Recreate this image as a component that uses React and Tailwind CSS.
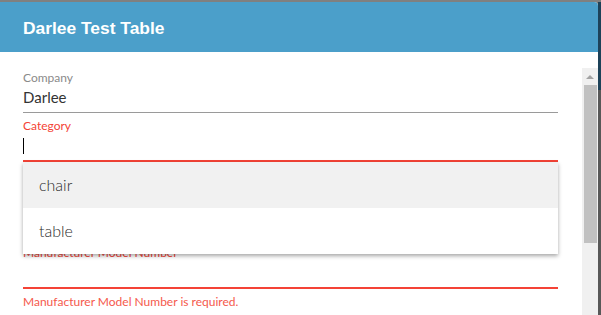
export default function App() {
  const lato = { fontFamily: 'Lato, "Open Sans", sans-serif' };
  return (
    <div className="w-[601px] h-[315px] overflow-hidden bg-[#7d7d7d] flex flex-col">
      <div className="h-[2px] bg-[#808080] shrink-0" />
      <div className="flex flex-1 min-h-0">
        <div className="w-[598px] flex flex-col bg-white rounded-tr-[4px] overflow-hidden">
          <div className="h-[50px] shrink-0 bg-[#4b9fca] pl-[23px] flex items-center">
            <span
              className="text-white font-bold text-[17.4px] leading-[20px] pt-[1px]"
              style={{ fontFamily: '"Liberation Sans", Arial, sans-serif' }}
            >
              Darlee Test Table
            </span>
          </div>
          <div className="relative flex flex-1 min-h-0" style={lato}>
            <div className="w-[582px] pl-[23px] pr-[24px] pt-[19px] flex flex-col">
              <div className="text-[12px] leading-[14px] text-[#8a8a8a]">Company</div>
              <div className="pt-[2px] pb-[5px] border-b border-[#9a9a9a] text-[15px] leading-[20px] text-[#333]">
                Darlee
              </div>
              <div className="mt-[6px] text-[12px] leading-[14px] text-[#f44336]">Category</div>
              <div className="pt-[5px] pb-[6px] border-b-2 border-[#f44336]">
                <div className="w-[1px] h-[16px] bg-black" />
              </div>
              <div className="mt-[84px] text-[12px] leading-[14px] text-[#f44336]">
                Manufacturer Model Number
              </div>
              <div className="h-[29px] border-b-2 border-[#f44336]" />
              <div className="mt-[6px] text-[12px] leading-[14px] text-[#f5594c]">
                Manufacturer Model Number is required.
              </div>
            </div>
            <div className="w-[16px] mt-[16px] bg-[#f0f0f0] flex flex-col">
              <div className="h-[17px] flex items-center justify-center">
                <svg width="8" height="5" viewBox="0 0 8 5" className="mt-[1px]">
                  <polygon points="0,4 4,0 8,4" fill="#a3a3a3" />
                </svg>
              </div>
              <div className="ml-[2px] w-[13px] h-[158px] bg-[#c1c1c1]" />
            </div>
            <div className="absolute left-[23px] top-[110px] w-[535px] bg-white shadow-[0_2px_4px_rgba(0,0,0,0.35)] text-[16px] font-light text-[#2a2a2a]">
              <div className="h-[46px] bg-[#f1f1f1] pl-[16px] flex items-center">chair</div>
              <div className="h-[46px] pl-[16px] flex items-center">table</div>
            </div>
          </div>
        </div>
        <div className="w-[3px] flex flex-col">
          <div className="h-[88px] bg-[#1d4259]" />
          <div className="flex-1 bg-[#585858]" />
        </div>
      </div>
    </div>
  );
}
